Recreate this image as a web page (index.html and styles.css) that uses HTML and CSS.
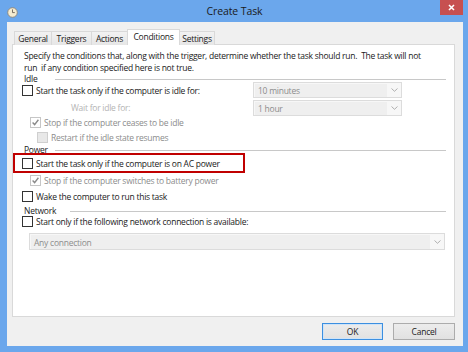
FILE: index.html
```html
<!DOCTYPE html>
<html>
<head>
<meta charset="utf-8">
<link rel="stylesheet" href="styles.css">
</head>
<body>
<div class="window">
  <div class="titlebar">
    <div class="tb-left">
      <svg class="appicon" width="11" height="11" viewBox="0 0 11 11">
        <circle cx="5.5" cy="5.5" r="4.8" fill="#f6ecd0" stroke="#8c8478" stroke-width="0.9"/>
        <path d="M5.5 2.4 V5.6 H7.8" fill="none" stroke="#6b6358" stroke-width="0.9"/>
      </svg>
    </div>
    <div class="title">Create Task</div>
    <div class="tb-right">
      <div class="close">
        <svg width="7" height="7" viewBox="0 0 7 7"><path d="M1 1 L6 6 M6 1 L1 6" stroke="#fff" stroke-width="1.6"/></svg>
      </div>
    </div>
  </div>
  <div class="client">
    <div class="tabs">
      <div class="tab t-general">General</div>
      <div class="tab t-triggers">Triggers</div>
      <div class="tab t-actions">Actions</div>
      <div class="tab tab-sel t-conditions">Conditions</div>
      <div class="tab t-settings">Settings</div>
    </div>
    <div class="panel">
      <div class="desc">Specify the conditions that, along with the trigger, determine whether the task should run.&nbsp; The task will not<br>run&nbsp; if any condition specified here is not true.</div>

      <div class="hdr"><span class="hdr-label w-idle">Idle</span><span class="hdr-line"></span></div>

      <div class="idlerow">
        <div class="row"><span class="cb"></span><span class="lbl">Start the task only if the computer is idle for:</span></div>
        <div class="combo"><span class="combo-text">10 minutes</span><span class="combo-btn"><svg width="7" height="4" viewBox="0 0 7 4"><path d="M0.5 0.5 L3.5 3.3 L6.5 0.5" fill="none" stroke="#a8a8a8" stroke-width="0.9"/></svg></span></div>
      </div>

      <div class="idlerow">
        <div class="row"><span class="wait">Wait for idle for:</span></div>
        <div class="combo combo-2"><span class="combo-text">1 hour</span><span class="combo-btn"><svg width="7" height="4" viewBox="0 0 7 4"><path d="M0.5 0.5 L3.5 3.3 L6.5 0.5" fill="none" stroke="#a8a8a8" stroke-width="0.9"/></svg></span></div>
      </div>

      <div class="row ind1"><span class="cb cb-dis"><svg width="9" height="9" viewBox="0 0 9 9"><path d="M1.6 4.6 L3.6 6.6 L7.4 1.8" fill="none" stroke="#8a8a8a" stroke-width="1.4"/></svg></span><span class="lbl lbl-dis">Stop if the computer ceases to be idle</span></div>

      <div class="row ind2"><span class="cb cb-dis cb-fill"></span><span class="lbl lbl-dis">Restart if the idle state resumes</span></div>

      <div class="hdr"><span class="hdr-label w-idle">Power</span><span class="hdr-line"></span></div>

      <div class="row row-mark"><span class="cb"></span><span class="lbl">Start the task only if the computer is on AC power</span></div>

      <div class="row ind1"><span class="cb cb-dis"><svg width="9" height="9" viewBox="0 0 9 9"><path d="M1.6 4.6 L3.6 6.6 L7.4 1.8" fill="none" stroke="#8a8a8a" stroke-width="1.4"/></svg></span><span class="lbl lbl-dis">Stop if the computer switches to battery power</span></div>

      <div class="row"><span class="cb"></span><span class="lbl">Wake the computer to run this task</span></div>

      <div class="hdr"><span class="hdr-label w-net">Network</span><span class="hdr-line"></span></div>

      <div class="row"><span class="cb"></span><span class="lbl">Start only if the following network connection is available:</span></div>

      <div class="combo combo-net"><span class="combo-text">Any connection</span><span class="combo-btn"><svg width="7" height="4" viewBox="0 0 7 4"><path d="M0.5 0.5 L3.5 3.3 L6.5 0.5" fill="none" stroke="#a8a8a8" stroke-width="0.9"/></svg></span></div>
    </div>
    <div class="buttons">
      <div class="btn btn-default">OK</div>
      <div class="btn">Cancel</div>
    </div>
  </div>
</div>
</body>
</html>
```

FILE: styles.css
```css
* { box-sizing: border-box; }

html, body {
  margin: 0;
  padding: 0;
}

body {
  width: 468px;
  height: 352px;
  overflow: hidden;
  background: #6ba7ec;
  font-family: "Open Sans", "Noto Sans", sans-serif;
  font-size: 8.5px;
  letter-spacing: -0.25px;
  color: #1a1a1a;
}

.window {
  width: 468px;
  height: 352px;
}

.titlebar {
  height: 22px;
  display: grid;
  grid-template-columns: 1fr auto 1fr;
}

.tb-left {
  display: flex;
  align-items: flex-start;
  padding: 7px 0 0 7px;
}

.title {
  font-size: 10.5px;
  letter-spacing: -0.1px;
  line-height: 22px;
  color: #1a1a1a;
  padding-left: 1px;
}

.tb-right {
  display: flex;
  justify-content: flex-end;
  align-items: flex-start;
  padding-right: 5px;
}

.close {
  width: 23px;
  height: 15px;
  background: #c75050;
  display: flex;
  align-items: center;
  justify-content: center;
}

.client {
  margin-left: 7px;
  width: 456px;
  height: 324px;
  background: #f0f0f0;
  padding: 7px 8px 0 5px;
}

.tabs {
  display: flex;
  align-items: flex-end;
  height: 16px;
  margin-left: 2px;
  position: relative;
  z-index: 1;
}

.tab {
  height: 14px;
  border: 1px solid #d9d9d9;
  border-bottom: none;
  background: linear-gradient(#f2f2f2, #e6e6e6);
  line-height: 13px;
  text-align: center;
  margin-right: -1px;
}

.t-general { width: 38px; }
.t-triggers { width: 41px; }
.t-actions { width: 37px; }
.t-conditions { width: 53px; }
.t-settings { width: 36px; }

.tab-sel {
  height: 16px;
  background: #ffffff;
  line-height: 14px;
  position: relative;
  z-index: 2;
}

.panel {
  margin-top: -1px;
  height: 273px;
  background: #ffffff;
  border: 1px solid #d9d9d9;
  padding: 5px 8px 0 9px;
  display: grid;
  grid-template-rows: 24px 8px 17px 16px 15px 15px 8px 20px 15px 16px 10px 14px 22px;
}

.desc {
  line-height: 12px;
  margin-left: 2px;
  white-space: nowrap;
}

.hdr {
  display: flex;
  align-items: center;
  height: 12px;
  line-height: 12px;
  align-self: end;
  margin-bottom: -3px;
  margin-left: 2px;
}

.hdr-label { flex: none; }
.w-idle { width: 31px; }
.w-net { width: 46px; }

.hdr-line {
  flex: 1;
  border-top: 1px solid #c8c8c8;
  height: 0;
}

.row {
  display: flex;
  align-items: center;
  white-space: nowrap;
}

.ind1 { padding-left: 8px; }
.ind2 { padding-left: 15px; }

.cb {
  flex: none;
  width: 11px;
  height: 11px;
  border: 1px solid #333333;
  background: #ffffff;
  display: flex;
  align-items: center;
  justify-content: center;
}

.cb-dis {
  border-color: #c6c6c6;
}

.cb-fill {
  background: #e8e8e8;
  border-color: #cfcfcf;
}

.lbl {
  margin-left: 3px;
}

.lbl-dis {
  color: #8c8c8c;
}

.wait {
  padding-left: 49px;
  color: #b4b4b4;
}

.idlerow {
  display: grid;
  grid-template-columns: 231px 149px;
}

.idlerow .row {
  align-self: stretch;
}

.combo {
  height: 16px;
  border: 1px solid #dcdcdc;
  background: #f7f7f7;
  display: flex;
  align-self: start;
}

.combo-2 {
  margin-top: 1px;
}

.combo-text {
  flex: 1;
  background: #efefef;
  color: #8d8d8d;
  line-height: 14px;
  padding-left: 3px;
  margin: 1px 0 0 1px;
  height: 13px;
}

.combo-btn {
  width: 14px;
  display: flex;
  align-items: center;
  justify-content: center;
}

.combo-net {
  align-self: end;
  height: 17px;
  margin-left: 7px;
  margin-right: 1px;
}

.combo-net .combo-text {
  line-height: 15px;
  height: 14px;
}

.row-mark {
  margin-left: -9px;
  width: 232px;
  border: 2px solid #c00000;
  padding-left: 7px;
}

.buttons {
  display: flex;
  justify-content: flex-end;
  gap: 10px;
  margin-top: 6px;
}

.btn {
  width: 62px;
  height: 17px;
  border: 1px solid #acacac;
  background: linear-gradient(#ececec, #e1e1e1);
  text-align: center;
  line-height: 15px;
}

.btn-default {
  width: 61px;
  border-color: #3c8fe0;
  box-shadow: inset 0 0 0 1px #cfe4f8;
}
```
